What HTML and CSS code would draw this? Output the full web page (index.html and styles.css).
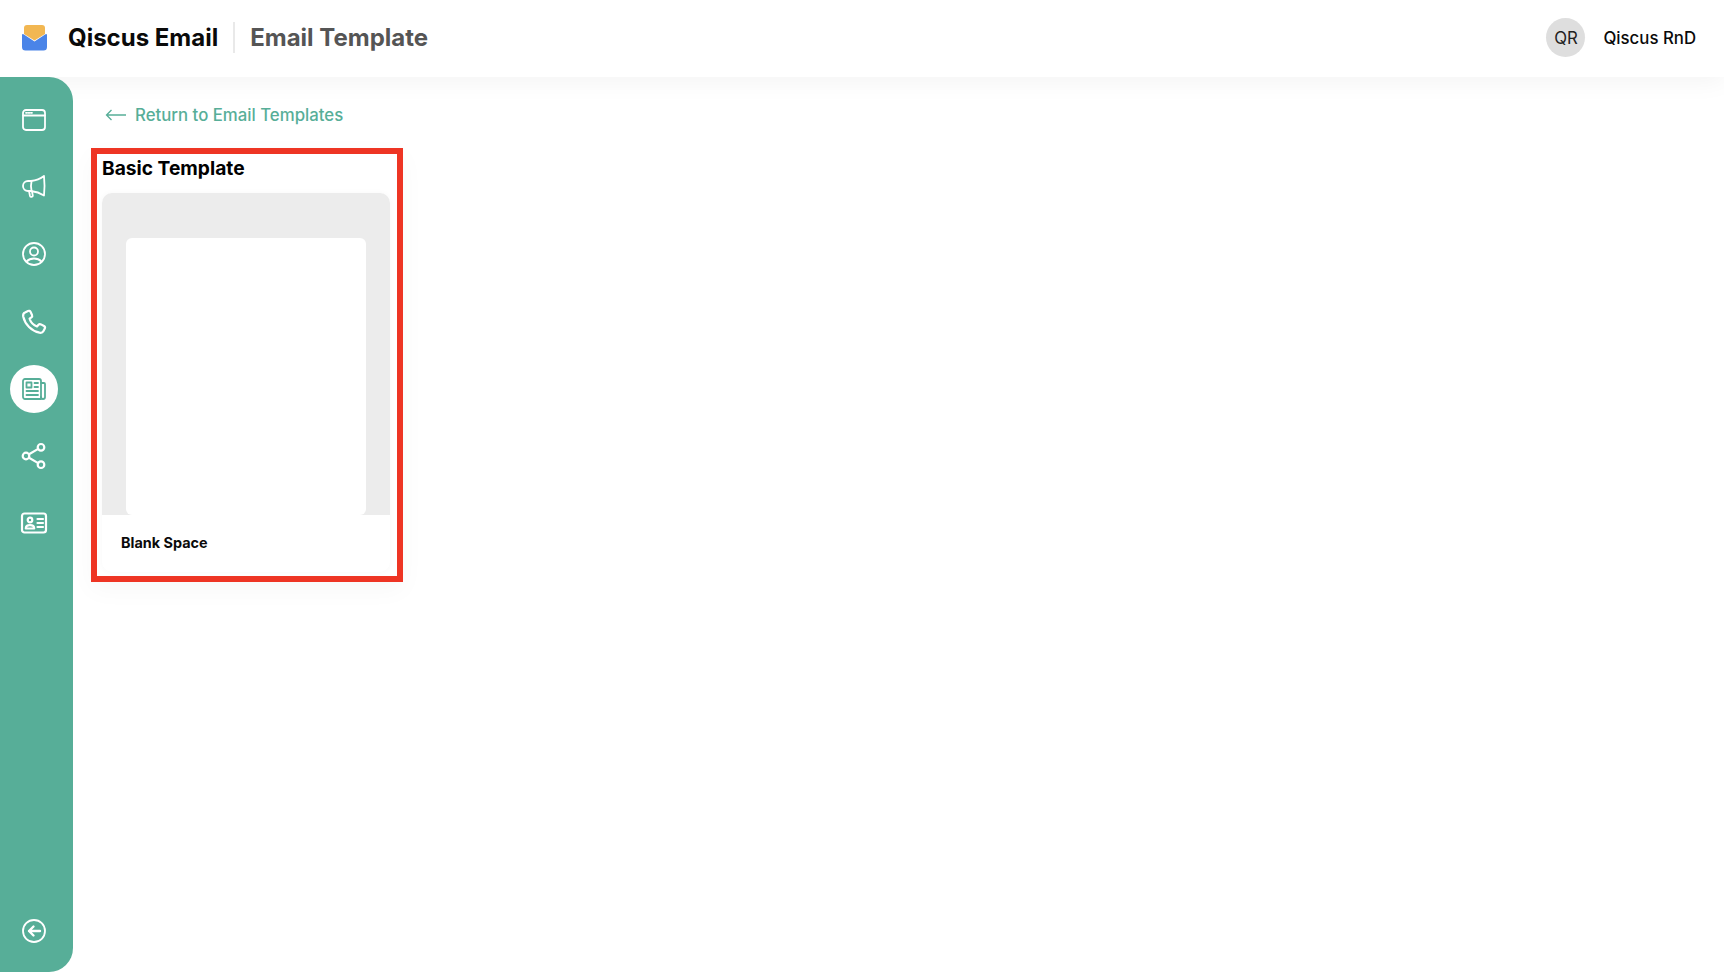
FILE: index.html
```html
<!DOCTYPE html>
<html lang="en">
<head>
    <meta charset="UTF-8">
    <title>Email Template</title>
    <link rel="stylesheet" href="styles.css">
</head>
<body>

    <header class="topbar">
        <svg class="logo" width="26" height="26" viewBox="0 0 26 26">
            <path d="M5 0h15a3 3 0 0 1 3 3v6l-10.500 6.500L2 9V3a3 3 0 0 1 3-3z" fill="#f2b752"/>
            <path d="M0 10a1 1 0 0 1 1.500-.8l11 7.300 11-7.300a1 1 0 0 1 1.500.8v12a3.500 3.500 0 0 1-3.500 3.500h-18A3.500 3.500 0 0 1 0 22z" fill="#4a84e8"/>
        </svg>
        <span class="brand">Qiscus Email</span>
        <span class="divider"></span>
        <span class="page-title">Email Template</span>
        <div class="user">
            <span class="avatar">QR</span>
            <span class="user-name">Qiscus RnD</span>
        </div>
    </header>

    <div class="layout">
        <aside class="sidebar">
            <nav class="nav">
                <a class="nav-item">
                    <svg viewBox="0 0 24 24" width="24" height="24"><rect x="1" y="2" width="22" height="20" rx="3"/><path d="M1 7.500h22"/><path class="dots" d="M4 4.800h1M6.500 4.800h1M9 4.800h1"/></svg>
                </a>
                <a class="nav-item">
                    <svg viewBox="0 0 24 24" width="24" height="24"><path d="M22 1c-4 3-9 4.500-13 5H6a4.500 4.500 0 0 0 0 10h3c4 .5 9 2 13 4.500 .7-6.500 .7-13 0-19.500z"/><path d="M9.500 6.500c-.7 3-.7 6 0 9"/><path d="M7 16l1 5c.5 1.500 3 1 2.800-.5l-.8-4"/></svg>
                </a>
                <a class="nav-item">
                    <svg viewBox="0 0 24 24" width="24" height="24"><circle cx="12" cy="12" r="11"/><circle cx="12" cy="9.500" r="4"/><path d="M4.500 19.500c4-4 11-4 15 0"/></svg>
                </a>
                <a class="nav-item">
                    <svg class="bold" viewBox="0 0 24 24" width="24" height="24"><path d="M3 2.500L6 1C7 .5 8 .8 8.500 1.800L10 5c.4 1 .2 1.800-.6 2.400L7.600 8.700c1 3.300 3.900 6.300 7.400 7.800l1.500-1.700c.7-.8 1.500-.9 2.500-.4l3 1.600c1 .6 1.300 1.500.8 2.500L21.500 21c-.7 1.400-2.300 2-4 1.700C9.500 21 3 14.500 1.200 6.500.9 4.800 1.500 3.200 3 2.500z"/></svg>
                </a>
                <a class="nav-item active">
                    <svg viewBox="0 0 24 24" width="24" height="24"><path d="M19 22H3a2 2 0 0 1-2-2V4a2 2 0 0 1 2-2h14a2 2 0 0 1 2 2v18z"/><path d="M19 6h3a1 1 0 0 1 1 1v13a2 2 0 0 1-4 0"/><rect x="4.500" y="5.500" width="5" height="5"/><path d="M12.500 6h3.500M12.500 10h3.500M4.500 14h11.500M4.500 18h11.500"/></svg>
                </a>
                <a class="nav-item">
                    <svg class="bold" viewBox="0 0 24 24" width="24" height="24"><circle cx="4" cy="12" r="3.300"/><circle cx="19" cy="3.300" r="3.300"/><circle cx="19" cy="20.700" r="3.300"/><path d="M7 10.300l9.200-5.400M7 13.700l9.200 5.400"/></svg>
                </a>
                <a class="nav-item">
                    <svg class="bold" viewBox="0 0 26 24" width="26" height="24"><rect x="1" y="2.500" width="24" height="19" rx="2.500"/><circle cx="9" cy="9" r="2.300"/><path d="M4.800 17.500c0-4.500 8.400-4.500 8.400 0z"/><path d="M16.500 8h5.500M16.500 12h5.500M16.500 16h5.500"/></svg>
                </a>
            </nav>
            <a class="nav-item">
                <svg viewBox="0 0 24 24" width="24" height="24"><circle cx="12" cy="12" r="11"/><path class="heavy" d="M18 12H7M11.500 7.500L7 12l4.500 4.500"/></svg>
            </a>
        </aside>

        <main class="content">
            <a class="back-link">
                <svg width="22" height="12" viewBox="0 0 22 12"><path d="M21 6H1.500M6.500 1L1.500 6l5 5" fill="none" stroke="#57ae98" stroke-width="1.300"/></svg>
                <span>Return to Email Templates</span>
            </a>

            <section class="template-group">
                <h2 class="group-title">Basic Template</h2>
                <div class="template-card">
                    <div class="preview">
                        <div class="sheet"></div>
                    </div>
                    <div class="card-name">Blank Space</div>
                </div>
            </section>
        </main>
    </div>

</body>
</html>
```

FILE: styles.css
```css
* {
    box-sizing: border-box;
}

body {
    margin: 0;
    height: 972px;
    overflow: hidden;
    background-color: #fff;
    font-family: 'Inter', sans-serif;
    color: #000;
}

.topbar {
    position: relative;
    z-index: 1;
    display: flex;
    align-items: center;
    height: 77px;
    padding: 0 28px 2px 22px;
    background-color: #fff;
    box-shadow: 0 4px 24px rgba(0, 0, 0, 0.05);
}

.logo {
    flex: none;
}

.brand {
    margin-left: 20px;
    font-size: 24px;
    font-weight: 700;
    color: #0a0a0a;
}

.divider {
    width: 2px;
    height: 31px;
    margin: 0 15px;
    background-color: #e9e9e9;
}

.page-title {
    font-size: 24px;
    font-weight: 700;
    color: #555;
}

.user {
    display: flex;
    align-items: center;
    gap: 18px;
    margin-left: auto;
}

.avatar {
    display: flex;
    align-items: center;
    justify-content: center;
    width: 39px;
    height: 39px;
    border-radius: 50%;
    background-color: #dedede;
    font-size: 16.800px;
    color: #222;
}

.user-name {
    font-size: 16.800px;
    font-weight: 500;
    color: #0a0a0a;
}

.layout {
    display: flex;
    height: 895px;
}

.sidebar {
    position: relative;
    z-index: 2;
    display: flex;
    flex-direction: column;
    justify-content: space-between;
    align-items: center;
    flex: none;
    width: 73px;
    padding: 19px 5px 17px 0;
    background-color: #57ae98;
    border-radius: 0 24px 24px 0;
}

.nav {
    display: flex;
    flex-direction: column;
    gap: 19.200px;
}

.nav-item {
    display: flex;
    align-items: center;
    justify-content: center;
    width: 48px;
    height: 48px;
    border-radius: 50%;
}

.nav-item svg {
    overflow: visible;
    fill: none;
    stroke: #fff;
    stroke-width: 1.800;
    stroke-linecap: round;
    stroke-linejoin: round;
}

.nav-item svg.bold {
    stroke-width: 2.200;
}

.nav-item svg .heavy {
    stroke-width: 2.400;
}

.nav-item.active {
    background-color: #fff;
}

.nav-item.active svg {
    stroke: #57ae98;
}

.content {
    flex: 1;
    padding: 28px 18px;
}

.back-link {
    display: flex;
    align-items: center;
    gap: 8px;
    height: 20px;
    margin-left: 14px;
    font-size: 16.800px;
    font-weight: 500;
    color: #57ae98;
}

.template-group {
    width: 312px;
    height: 434px;
    margin-top: 23px;
    padding: 0 5px;
    border: 6px solid #ee3524;
    box-shadow: 0 8px 24px rgba(0, 0, 0, 0.03);
}

.group-title {
    margin: 2px 0 13px;
    font-size: 19.200px;
    line-height: 24px;
    font-weight: 700;
    color: #000;
}

.template-card {
    width: 288px;
    border-radius: 10px;
    overflow: hidden;
    background-color: #fff;
    box-shadow: 0 0 6px rgba(0, 0, 0, 0.03);
}

.preview {
    display: flex;
    justify-content: center;
    height: 322px;
    padding-top: 45px;
    background-color: #ececec;
}

.sheet {
    width: 240px;
    height: 277px;
    border-radius: 6px;
    background-color: #fff;
}

.card-name {
    height: 57px;
    padding: 19px 19px 0;
    font-size: 14.400px;
    line-height: 17px;
    font-weight: 700;
    color: #0a0a0a;
}
```
